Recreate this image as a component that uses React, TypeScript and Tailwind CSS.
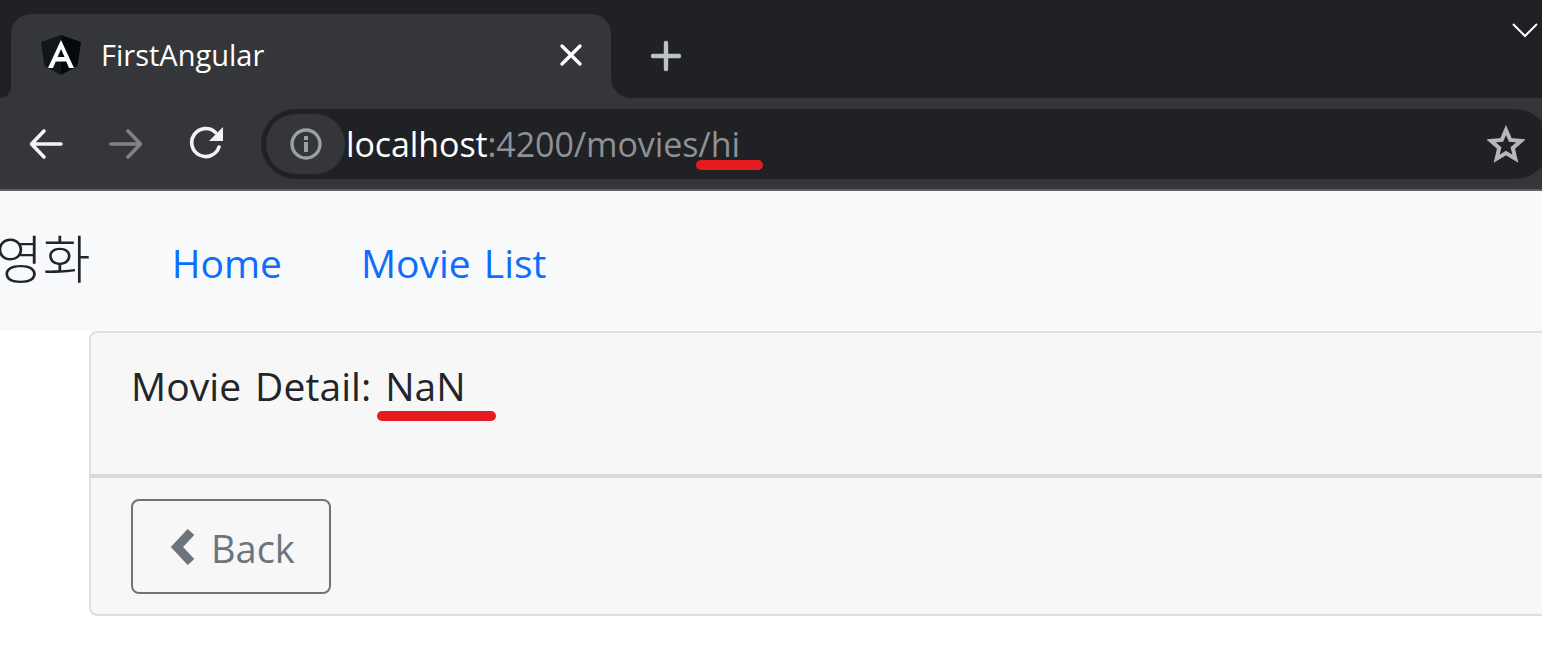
export default function App() {
  const sans = "font-['Open_Sans','Noto_Sans_CJK_KR',sans-serif]";
  return (
    <div className={`h-[662px] w-[1542px] overflow-hidden bg-white ${sans}`}>
      {/* tab strip */}
      <div className="flex h-[98px] bg-[#35363a]">
        <div className="w-[11px] rounded-br-[11px] bg-[#202124]" />
        <div className="w-[600px] bg-[#202124] pt-[14px]">
          <div className="flex h-[84px] items-center rounded-t-[20px] bg-[#35363a] pb-[2px] pl-[30px] pr-[28px]">
            <svg width="40" height="40" viewBox="0 0 40 40" className="shrink-0">
              <path d="M20 0 L0 7 L3.500 31 L20 40 Z" fill="#12161c" />
              <path d="M20 0 L40 7 L36.500 31 L20 40 Z" fill="#05080d" />
              <path d="M20 5 L7 33 L12 33 L14.700 26.500 L25.300 26.500 L28 33 L33 33 Z M16.500 22 L20 14 L23.500 22 Z" fill="#fff" fillRule="evenodd" />
            </svg>
            <span className="ml-[20px] flex-1 text-[29px] text-white">FirstAngular</span>
            <svg width="24" height="24" viewBox="0 0 24 24">
              <path d="M3 3 L21 21 M21 3 L3 21" stroke="#fff" strokeWidth="3.400" strokeLinecap="round" />
            </svg>
          </div>
        </div>
        <div className="flex flex-1 items-start justify-between rounded-bl-[20px] bg-[#202124]">
          <svg width="32" height="32" viewBox="0 0 32 32" className="ml-[39px] mt-[40px]">
            <path d="M16 3 V29 M3 16 H29" stroke="#bdc1c6" strokeWidth="4.400" strokeLinecap="round" />
          </svg>
          <svg width="26" height="16" viewBox="0 0 26 16" className="mr-[4px] mt-[22px]">
            <path d="M1 2 L13 14 L25 2" stroke="#fff" strokeWidth="2" fill="none" />
          </svg>
        </div>
      </div>
      {/* toolbar */}
      <div className="flex h-[93px] items-center border-b-2 border-[#5f6063] bg-[#35363a] pt-[1px]">
        <svg width="36" height="32" viewBox="0 0 36 32" className="ml-[28px]">
          <path d="M33 16 H4 M16 3 L3.500 16 L16 29" stroke="#f1f3f4" strokeWidth="3.600" strokeLinecap="round" strokeLinejoin="round" fill="none" />
        </svg>
        <svg width="36" height="32" viewBox="0 0 36 32" className="ml-[44px]">
          <path d="M3 16 H32 M20 3 L32.500 16 L20 29" stroke="#7f8184" strokeWidth="3.600" strokeLinecap="round" strokeLinejoin="round" fill="none" />
        </svg>
        <svg width="36" height="36" viewBox="0 0 36 36" className="ml-[45px]">
          <path d="M30 21 A14 14 0 1 1 26.500 6.500" stroke="#f1f3f4" strokeWidth="3.600" fill="none" strokeLinecap="round" />
          <path d="M34 1 V15 H20 Z" fill="#f1f3f4" />
        </svg>
        <div className="relative -mr-[8px] ml-[36px] flex h-[70px] flex-1 items-center rounded-[35px] bg-[#202124] pl-[5px]">
          <div className="flex h-[60px] w-[79px] items-center justify-center rounded-[30px] bg-[#35363a]">
            <svg width="34" height="34" viewBox="0 0 34 34">
              <circle cx="17" cy="17" r="14" stroke="#9aa0a6" strokeWidth="3.400" fill="none" />
              <rect x="15" y="15" width="4" height="10" fill="#9aa0a6" />
              <rect x="15" y="9" width="4" height="4" fill="#9aa0a6" />
            </svg>
          </div>
          <span className="ml-[1px] text-[34px] leading-none tracking-[-0.1px] text-white">
            localhost<span className="text-[#8e9195]">:4200/movies/hi</span>
          </span>
          <span className="absolute left-[435px] top-[51px] h-[10px] w-[67px] rounded-[5px] bg-[#e51c1f]" />
          <svg width="38" height="38" viewBox="0 0 38 38" className="ml-auto mr-[25px]">
            <path d="M19 5 L23.200 14.900 L34 15.800 L25.800 23 L28.300 33.600 L19 28 L9.700 33.600 L12.200 23 L4 15.800 L14.800 14.900 Z" stroke="#b5b7b9" strokeWidth="4" fill="none" />
          </svg>
        </div>
      </div>
      {/* navbar */}
      <nav className="flex h-[140px] items-center bg-[#f8f9fa] pt-[2px]">
        <span className="-ml-[5px] -mt-[6px] text-[52px] font-light leading-none text-[#212529]">영화</span>
        <a className="ml-[81px] text-[39px] leading-none text-[#0d6efd]">Home</a>
        <a className="ml-[79px] text-[39px] leading-none text-[#0d6efd] [word-spacing:3px]">Movie List</a>
      </nav>
      {/* card */}
      <div className="ml-[89px] w-[1500px] rounded-[8px] border-2 border-[#dfdfdf] bg-[#f7f7f7]">
        <div className="relative h-[145px] border-b-4 border-[#d9d9d9] pl-[40px] pt-[33px]">
          <span className="text-[39px] leading-none tracking-[0.1px] text-[#212529] [word-spacing:3.500px]">Movie Detail: NaN</span>
          <span className="absolute left-[286px] top-[78px] h-[10px] w-[119px] rounded-[5px] bg-[#e51c1f]" />
        </div>
        <div className="h-[136px] pl-[40px] pt-[21px]">
          <button className="flex h-[95px] w-[200px] items-center rounded-[8px] border-2 border-[#6c757d] pl-[38px] text-[38px] leading-none text-[#6c757d]">
            <svg width="26" height="36" viewBox="0 0 26 36">
              <path d="M20 3 L6 18 L20 33" stroke="#6c757d" strokeWidth="9" fill="none" strokeLinejoin="miter" />
            </svg>
            <span className="ml-[14px] mt-[2px]">Back</span>
          </button>
        </div>
      </div>
    </div>
  );
}
